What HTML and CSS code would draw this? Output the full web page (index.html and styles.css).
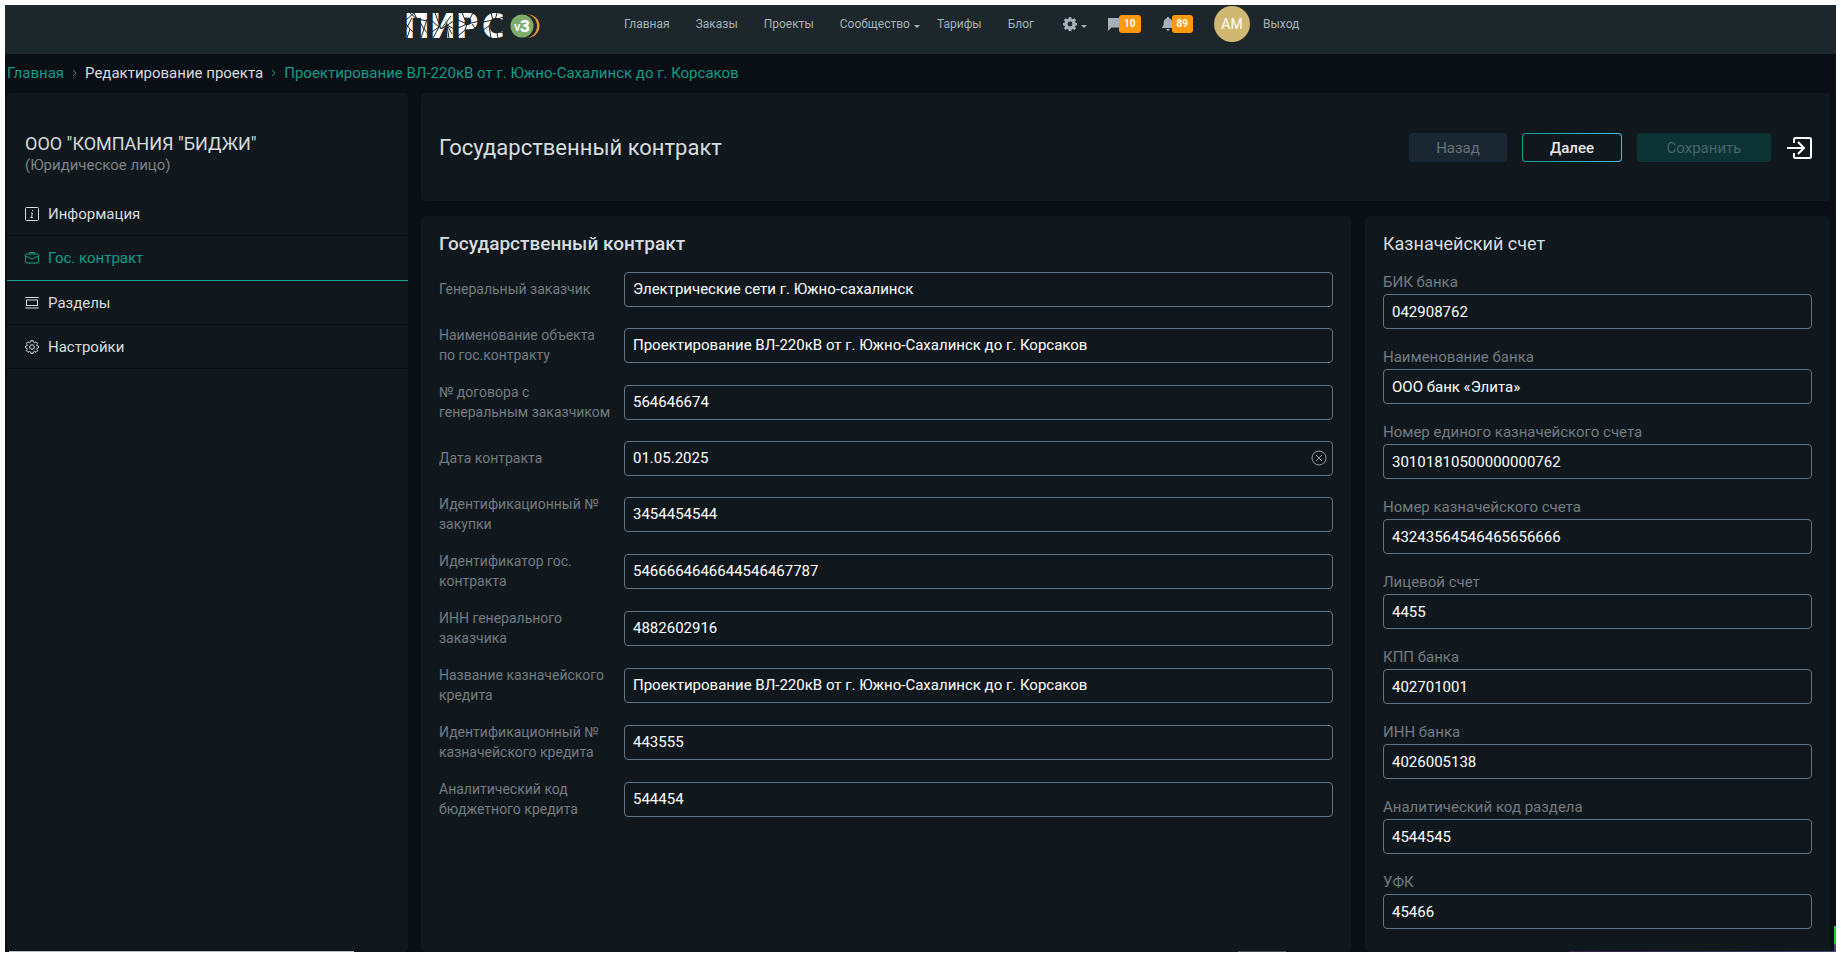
FILE: index.html
```html
<!DOCTYPE html>
<html lang="ru">
<head>
<meta charset="utf-8">
<title>Государственный контракт</title>
<link rel="stylesheet" href="styles.css">
</head>
<body>
<div class="page">
  <header class="topbar">
    <a class="logo" href="#" aria-label="ПИРС v3">
      <svg width="136" height="28" viewBox="0 0 136 28">
        <text class="logo-text" x="-1 25 51 77" y="26">ПИРС</text>
        <g class="logo-cracks">
          <path d="M1 8L9 1L12 7L22 9M5 1L12 7M1 17L7 6M2 26L5 17L1 12M5 17L9 21M16 26L19 17L15 10M19 17L23 22M19 17L22 7"/>
          <path d="M27 9L34 15L28 26M30 1L36 17L46 4M36 17L49 9M34 15L27 20M44 26L42 13L49 17M42 13L47 22"/>
          <path d="M53 8L62 12L68 1M57 1L62 12L75 9M62 12L60 18L53 24M60 18L73 17M53 16L62 12M67 12L72 19"/>
          <path d="M78 10L88 8L86 1M88 8L99 5M88 8L84 14L78 18M84 14L86 26M86 18L99 21M92 1L90 8M92 20L93 27"/>
        </g>
        <circle cx="123" cy="14" r="11.500" fill="#e8972e"/>
        <circle cx="120" cy="14" r="12" fill="#1c262b"/>
        <circle cx="117" cy="14" r="11.500" fill="#7fac6b"/>
        <text class="logo-v" x="109" y="19">v</text>
        <text class="logo-3" x="115" y="20">3</text>
      </svg>
    </a>
    <nav class="nav">
      <a href="#">Главная</a>
      <a href="#">Заказы</a>
      <a href="#">Проекты</a>
      <a class="tight" href="#">Сообщество<span class="caret"></span></a>
      <a href="#">Тарифы</a>
      <a class="wide" href="#">Блог</a>
      <a class="counter" href="#" aria-label="Настройки">
        <svg width="14" height="14" viewBox="0 0 16 16"><path fill="currentColor" fill-rule="evenodd" d="M6.600 0h2.800l.5 2.100 1.200.5L13 1.500l2 2-1.200 1.800.5 1.200 1.700.4v2.500l-1.800.5-.5 1.200 1.200 1.900-1.900 1.900-1.900-1.100-1.200.5-.5 2.200H6.600l-.5-2.200-1.200-.5L3 14.900 1.100 13l1.200-1.900-.5-1.200L0 9.400V6.900l1.800-.4.5-1.200L1.100 3.500l1.900-2 1.900 1.100 1.200-.5zM8 5.200a2.800 2.800 0 1 0 0 5.600a2.800 2.800 0 1 0 0-5.600z"/></svg><span class="caret"></span>
      </a>
      <a class="counter" href="#" aria-label="Сообщения">
        <svg width="13" height="14" viewBox="0 0 13 14"><path fill="currentColor" d="M0 14V1h13v9.500H3.500z"/></svg><span class="badge">10</span>
      </a>
      <a class="counter" href="#" aria-label="Уведомления">
        <svg width="12" height="14" viewBox="0 0 12 14"><path fill="currentColor" d="M5 0h2v1.200c2.200.5 3.300 2.200 3.300 4.300 0 2.700.7 4.200 1.700 5V11H0v-.5c1-.8 1.700-2.300 1.700-5 0-2.100 1.100-3.800 3.300-4.300zM4.300 12h3.400a1.700 1.700 0 0 1-3.400 0z"/></svg><span class="badge">89</span>
      </a>
      <a class="avatar" href="#">AM</a>
      <a href="#">Выход</a>
    </nav>
  </header>

  <nav class="crumbs">
    <a href="#">Главная</a>
    <svg width="5" height="8" viewBox="0 0 5 8"><path d="M1 1l3 3-3 3"/></svg>
    <span class="current">Редактирование проекта</span>
    <svg width="5" height="8" viewBox="0 0 5 8"><path d="M1 1l3 3-3 3"/></svg>
    <a href="#">Проектирование ВЛ-220кВ от г. Южно-Сахалинск до г. Корсаков</a>
  </nav>

  <div class="layout">
    <aside class="card sidebar">
      <div class="company">
        <h1>ООО "КОМПАНИЯ "БИДЖИ"</h1>
        <p>(Юридическое лицо)</p>
      </div>
      <a class="side-link" href="#"><svg viewBox="0 0 14 14"><rect x=".5" y=".5" width="13" height="13" rx="1"/><path d="M7.600 3v1.200M6 6h1.300l-.8 4.500M5.500 10.500h2.500"/></svg>Информация</a>
      <a class="side-link active" href="#"><svg viewBox="0 0 14 14"><rect x=".5" y="3" width="13" height="9" rx="1"/><path d="M4.500 3V1.500h5V3M.5 5L7 8l6.500-3"/></svg>Гос. контракт</a>
      <a class="side-link" href="#"><svg viewBox="0 0 14 14"><rect x="1.500" y="4" width="11" height="5.500"/><path d="M.5 1.500h13M.5 12h13"/></svg>Разделы</a>
      <a class="side-link" href="#"><svg viewBox="0 0 14 14"><path d="M5.900.6h2.200l.4 1.600 1.100.5 1.500-.9 1.500 1.500-.9 1.500.5 1.100 1.300.3v1.600l-1.300.4-.5 1.100.9 1.500-1.500 1.500-1.500-.9-1.100.5-.4 1.500H5.900l-.4-1.500-1.100-.5-1.500.9-1.500-1.500.9-1.500-.5-1.100L.5 7.800V6.200l1.300-.3.500-1.100-.9-1.500 1.500-1.500 1.500.9 1.100-.5z"/><circle cx="7" cy="7" r="2.300"/></svg>Настройки</a>
    </aside>

    <main class="content">
      <section class="card heading">
        <h2>Государственный контракт</h2>
        <div class="actions">
          <button class="btn back" type="button" disabled>Назад</button>
          <button class="btn next" type="button">Далее</button>
          <button class="btn save" type="button" disabled>Сохранить</button>
          <button class="exit" type="button" aria-label="Выйти"><svg width="26" height="22" viewBox="0 0 26 22"><path d="M8 6V2.500Q8 1 9.500 1h14Q25 1 25 2.500v17q0 1.500-1.500 1.500h-14Q8 21 8 19.500V16M1 11h17M12 5l6 6-6 6"/></svg></button>
        </div>
      </section>

      <form class="panels">
        <section class="card contract">
          <h3>Государственный контракт</h3>
          <div class="rows">
            <div class="row"><label for="c1">Генеральный заказчик</label><input id="c1" type="text" value="Электрические сети г. Южно-сахалинск"></div>
            <div class="row"><label for="c2">Наименование объекта по гос.контракту</label><input id="c2" type="text" value="Проектирование ВЛ-220кВ от г. Южно-Сахалинск до г. Корсаков"></div>
            <div class="row"><label for="c3">№ договора с генеральным заказчиком</label><input id="c3" type="text" value="564646674"></div>
            <div class="row"><label for="c4">Дата контракта</label><div class="clearable"><input id="c4" type="text" value="01.05.2025"><button class="clear" type="button" aria-label="Очистить"><svg width="16" height="16" viewBox="0 0 16 16"><circle cx="8" cy="8" r="7"/><path d="M5 5l6 6M11 5l-6 6"/></svg></button></div></div>
            <div class="row"><label for="c5">Идентификационный № закупки</label><input id="c5" type="text" value="3454454544"></div>
            <div class="row"><label for="c6">Идентификатор гос. контракта</label><input id="c6" type="text" value="5466664646644546467787"></div>
            <div class="row"><label for="c7">ИНН генерального заказчика</label><input id="c7" type="text" value="4882602916"></div>
            <div class="row"><label for="c8">Название казначейского кредита</label><input id="c8" type="text" value="Проектирование ВЛ-220кВ от г. Южно-Сахалинск до г. Корсаков"></div>
            <div class="row"><label for="c9">Идентификационный № казначейского кредита</label><input id="c9" type="text" value="443555"></div>
            <div class="row"><label for="c10">Аналитический код бюджетного кредита</label><input id="c10" type="text" value="544454"></div>
          </div>
        </section>

        <section class="card account">
          <h3>Казначейский счет</h3>
          <div class="fields">
            <div class="field"><label for="b1">БИК банка</label><input id="b1" type="text" value="042908762"></div>
            <div class="field"><label for="b2">Наименование банка</label><input id="b2" type="text" value="ООО банк «Элита»"></div>
            <div class="field"><label for="b3">Номер единого казначейского счета</label><input id="b3" type="text" value="30101810500000000762"></div>
            <div class="field"><label for="b4">Номер казначейского счета</label><input id="b4" type="text" value="43243564546465656666"></div>
            <div class="field"><label for="b5">Лицевой счет</label><input id="b5" type="text" value="4455"></div>
            <div class="field"><label for="b6">КПП банка</label><input id="b6" type="text" value="402701001"></div>
            <div class="field"><label for="b7">ИНН банка</label><input id="b7" type="text" value="4026005138"></div>
            <div class="field"><label for="b8">Аналитический код раздела</label><input id="b8" type="text" value="4544545"></div>
            <div class="field"><label for="b9">УФК</label><input id="b9" type="text" value="45466"></div>
          </div>
        </section>
      </form>
    </main>
  </div>
  <span class="edge edge-left"></span>
  <span class="edge edge-mid"></span>
  <span class="edge edge-right"></span>
  <span class="edge-tab"></span>
</div>
</body>
</html>
```
FILE: styles.css
```css
* { box-sizing: border-box; }

body {
  margin: 0;
  padding: 5px;
  background: #fff;
  color: #d9dcdf;
  font: 15px/20px Roboto, "Liberation Sans", sans-serif;
}

a { color: inherit; text-decoration: none; }
h1, h2, h3, p { margin: 0; font-weight: 400; }
button, input { font: inherit; }

.page {
  position: relative;
  display: flex;
  flex-direction: column;
  min-height: calc(100vh - 10px);
  background: #0a0e15;
}

/* Top bar */
.topbar {
  display: flex;
  align-items: flex-start;
  height: 49px;
  padding: 1px 0 0 400px;
  background: #1c262b;
}
.logo { display: block; width: 219px; padding-top: 6px; }
.logo svg { display: block; overflow: visible; }
.logo-text { font: bold 34px "DejaVu Sans Condensed", "DejaVu Sans", sans-serif; fill: #fff; }
.logo-cracks { fill: none; stroke: #1c262b; stroke-width: 1; }
.logo-v { font: 500 13px Roboto, sans-serif; fill: #fff; }
.logo-3 { font: 900 17px Roboto, sans-serif; fill: #fff; }

.nav {
  display: flex;
  align-items: center;
  height: 36px;
  color: #a3b1bb;
  font-size: 12px;
}
.nav a { display: flex; align-items: center; margin-right: 26px; }
.nav .tight { margin-right: 17px; }
.nav .wide { margin-right: 29px; }
.nav .counter { margin-right: 21px; }
.caret {
  margin: 4px 0 0 4px;
  border: 3px solid transparent;
  border-top-color: currentColor;
  border-bottom: 0;
}
.badge {
  margin-left: -2px;
  padding: 0 5px;
  border-radius: 3px;
  background: #ff980f;
  color: #fff;
  font-size: 10px;
  font-weight: 700;
  line-height: 18px;
}
.nav .avatar {
  justify-content: center;
  width: 36px;
  height: 36px;
  margin-right: 13px;
  border-radius: 50%;
  background: #d1b872;
  color: #fff;
  font-size: 14px;
}

/* Breadcrumbs */
.crumbs {
  display: flex;
  align-items: center;
  gap: 8px;
  height: 39px;
  padding: 0 0 2px 2px;
  color: #119c86;
}
.crumbs svg { fill: none; stroke: currentColor; }
.crumbs .current { color: #d9dcdf; }

/* Layout */
.layout {
  display: grid;
  flex: 1;
  grid-template-columns: 401fr 1409fr;
  gap: 13px;
  padding: 0 6px 0 2px;
}
.card { border-radius: 4px; background: #10181e; }
.content { display: flex; flex-direction: column; gap: 15px; min-width: 0; }

/* Sidebar */
.sidebar { padding-top: 40px; }
.company { padding: 0 18px 17px; }
.company h1 { font-size: 18px; line-height: 22px; }
.company p { color: #7c8388; }
.side-link {
  display: flex;
  align-items: center;
  gap: 9px;
  height: 44px;
  padding: 0 18px;
  border-bottom: 1px solid #090e14;
}
.side-link svg { width: 14px; height: 14px; fill: none; stroke: currentColor; }
.side-link.active { height: 45px; border-color: #12a192; color: #119c86; }

/* Heading card */
.heading {
  display: flex;
  align-items: center;
  justify-content: space-between;
  height: 108px;
  padding: 1px 18px 0;
}
.heading h2 { font-size: 22px; line-height: 28px; }
.actions { display: flex; align-items: center; gap: 15px; }
.btn {
  height: 29px;
  padding: 0;
  border: 1px solid transparent;
  border-radius: 4px;
}
.back { width: 98px; background: #1a2632; color: #65717b; }
.next {
  width: 100px;
  background:
    linear-gradient(#10181e, #10181e) padding-box,
    linear-gradient(90deg, #14a08e, #46bee8) border-box;
  color: #e6e8ea;
  font-weight: 500;
}
.save { width: 134px; background: #0c3233; color: #46646a; }
.exit { padding: 0; border: 0; background: none; }
.exit svg { display: block; fill: none; stroke: #fff; stroke-width: 2; }

/* Form panels */
.panels {
  display: grid;
  flex: 1;
  grid-template-columns: 2fr 1fr;
  gap: 14px;
}
.contract, .account { padding: 16px 18px 22px; }
.contract h3, .account h3 { font-size: 18px; line-height: 24px; }
.contract h3 { font-size: 19px; font-weight: 500; }
label { color: #737b80; }
input {
  width: 100%;
  height: 35px;
  padding: 0 8px;
  border: 1px solid #62737f;
  border-radius: 4px;
  outline: 0;
  background: transparent;
  color: #fff;
}
.rows { display: flex; flex-direction: column; gap: 17px; padding-top: 14px; }
.row {
  display: grid;
  grid-template-columns: 173px 1fr;
  gap: 12px;
  align-items: center;
  min-height: 38px;
}
.row label { font-size: 14px; }
.clearable { position: relative; }
.clear {
  position: absolute;
  top: 9px;
  right: 6px;
  padding: 0;
  border: 0;
  background: none;
}
.clear svg { display: block; fill: none; stroke: #8b98a1; }
.fields { display: flex; flex-direction: column; gap: 18px; padding-top: 16px; }
.field { display: flex; flex-direction: column; gap: 2px; }

/* Edges of the panels that sit below the fold */
.edge { position: absolute; bottom: 0; height: 1px; }
.edge-left { left: 4px; width: 345px; background: #b4bcc2; }
.edge-mid { left: 1233px; width: 48px; background: #4a4d52; }
.edge-right { right: 0; width: 267px; background: linear-gradient(90deg, #2c2438, #41466b); }
.edge-tab {
  position: absolute;
  right: 0;
  bottom: 0;
  width: 2px;
  height: 26px;
  background: linear-gradient(#1fc43c 70%, #41466b 70%);
}
```
